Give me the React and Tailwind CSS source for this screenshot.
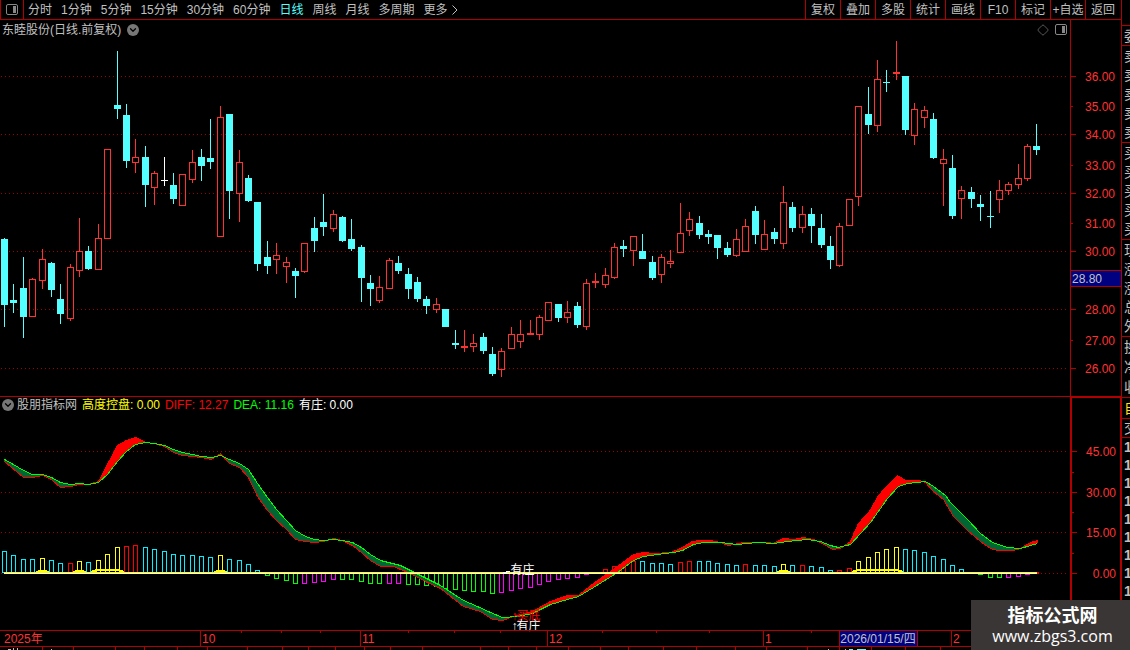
import React from 'react';
import { ChevronDown, Diamond } from 'lucide-react';

const RED = '#ff3232';
const CYAN = '#54ffff';

const periods = ['分时', '1分钟', '5分钟', '15分钟', '30分钟', '60分钟', '日线', '周线', '月线', '多周期'];
const tools = ['复权', '叠加', '多股', '统计', '画线', 'F10', '标记', '+自选', '返回'];

// [kind, high, low, body top, body bottom], r = up, c = down, w = flat
const candles = [
  ['c', 238, 327, 239, 305], ['c', 284, 313, 300, 303], ['c', 257, 338, 288, 317], ['r', 278, 317, 279, 317],
  ['r', 249, 289, 259, 281], ['c', 262, 297, 263, 290], ['c', 284, 324, 299, 314], ['r', 264, 321, 267, 319],
  ['r', 218, 277, 251, 271], ['c', 246, 270, 251, 269], ['r', 224, 270, 238, 270], ['r', 149, 239, 149, 239],
  ['c', 51, 119, 105, 109], ['c', 104, 168, 115, 161], ['r', 139, 173, 157, 163], ['c', 146, 207, 157, 185],
  ['r', 171, 205, 173, 188], ['w', 157, 186, 180, 181], ['c', 173, 204, 185, 199], ['r', 174, 206, 174, 206],
  ['r', 150, 183, 162, 180], ['c', 149, 181, 157, 166], ['c', 119, 169, 158, 162], ['r', 106, 237, 117, 237],
  ['c', 114, 219, 114, 191], ['r', 150, 222, 162, 194], ['c', 175, 202, 178, 201], ['c', 202, 271, 202, 264],
  ['c', 241, 274, 257, 266], ['r', 243, 274, 255, 260], ['r', 257, 283, 262, 267], ['c', 268, 298, 271, 276],
  ['r', 243, 273, 243, 272], ['c', 217, 252, 228, 241], ['c', 194, 236, 222, 227], ['r', 210, 232, 214, 229],
  ['c', 216, 242, 217, 241], ['c', 219, 251, 239, 249], ['c', 245, 302, 247, 278], ['c', 275, 306, 283, 289],
  ['r', 276, 303, 287, 301], ['r', 258, 289, 260, 289], ['c', 256, 274, 263, 271], ['c', 268, 299, 274, 289],
  ['c', 277, 302, 282, 299], ['c', 296, 314, 299, 306], ['r', 298, 313, 304, 310], ['c', 309, 327, 309, 327],
  ['c', 330, 349, 343, 345], ['r', 330, 352, 346, 348], ['r', 334, 352, 343, 347], ['c', 333, 354, 337, 351],
  ['c', 347, 376, 354, 374], ['r', 348, 377, 351, 370], ['r', 327, 349, 334, 349], ['r', 320, 348, 334, 342],
  ['r', 320, 335, 333, 335], ['r', 315, 340, 317, 335], ['r', 302, 321, 302, 321], ['c', 304, 322, 304, 318],
  ['r', 301, 323, 312, 318], ['c', 302, 328, 306, 325], ['r', 279, 330, 283, 327], ['r', 273, 288, 281, 283],
  ['r', 268, 288, 275, 285], ['r', 243, 279, 247, 278], ['c', 240, 257, 246, 249], ['r', 236, 266, 236, 251],
  ['c', 234, 259, 251, 259], ['c', 256, 280, 262, 278], ['r', 254, 283, 257, 275], ['r', 250, 268, 261, 264],
  ['r', 203, 253, 233, 253], ['r', 212, 236, 219, 231], ['c', 216, 239, 223, 235], ['c', 230, 244, 234, 237],
  ['c', 235, 259, 235, 248], ['c', 242, 257, 248, 255], ['r', 229, 257, 239, 256], ['r', 219, 252, 226, 252],
  ['c', 206, 244, 211, 235], ['r', 220, 250, 234, 250], ['c', 228, 244, 232, 239], ['r', 186, 249, 202, 244],
  ['c', 202, 232, 207, 228], ['r', 206, 233, 214, 228], ['c', 208, 243, 214, 226], ['c', 214, 248, 228, 245],
  ['c', 236, 269, 246, 260], ['r', 223, 267, 226, 266], ['r', 199, 226, 199, 226], ['r', 106, 206, 106, 197],
  ['c', 87, 134, 114, 125], ['r', 60, 132, 79, 126], ['c', 70, 92, 82, 83], ['r', 41, 80, 72, 74],
  ['c', 76, 135, 76, 130], ['r', 103, 145, 109, 136], ['r', 106, 128, 110, 118], ['c', 113, 159, 119, 158],
  ['r', 149, 206, 159, 164], ['c', 155, 219, 168, 216], ['r', 186, 219, 190, 199], ['c', 187, 208, 192, 199],
  ['c', 195, 221, 204, 207], ['c', 191, 228, 216, 217], ['r', 180, 213, 190, 200], ['r', 182, 195, 184, 191],
  ['r', 164, 189, 178, 185], ['r', 144, 181, 146, 179], ['c', 124, 155, 146, 150],
];

// histogram: colour letter + far end of each bar, 573 is the zero line
const bars = (
  'c551 c555 c559 c559 y558 c560 c563 r563 y561 c562 y560 y554 y547 r546 r545 c547 c549 c551 c554 c555 ' +
  'c555 c556 c557 y555 c559 c560 c564 c570 g576 g579 g581 g584 m584 m583 m582 m580 g580 g580 g582 g584 ' +
  'g584 m584 m584 g585 g585 g586 g587 g589 g590 g591 g592 g592 g594 m593 m591 m589 m588 m585 m582 m580 ' +
  'm579 m578 m575 - r569 r566 r563 r561 c561 c563 c563 c564 r562 r561 c561 c561 c563 c564 c565 r564 ' +
  'c565 c565 c566 y564 c565 r565 c566 c567 c570 r570 r568 y561 y557 y552 y549 y547 c549 c550 c552 c556 ' +
  'c559 c565 c569 - g575 g578 g578 m578 m577 m575 -'
).split(' ');
const barColors = { c: '#00f0ff', y: '#ffff00', r: '#ff0000', g: '#00ff00', m: '#ff00ff' };

const dea = [
  [4, 459], [13, 464], [23, 470], [32, 474], [42, 474], [51, 477], [60, 482], [70, 484], [79, 483], [88, 484],
  [98, 482], [107, 474], [117, 461], [126, 451], [135, 444], [145, 442], [154, 443], [164, 445], [173, 449],
  [182, 452], [192, 454], [201, 456], [211, 457], [220, 455], [229, 459], [239, 463], [248, 469], [257, 483],
  [267, 497], [276, 509], [286, 520], [295, 530], [305, 536], [314, 539], [323, 540], [333, 539], [342, 540],
  [352, 542], [361, 547], [370, 554], [380, 560], [400, 565], [420, 575], [440, 585], [463, 600], [477, 606],
  [490, 612], [502, 617], [517, 616], [532, 613], [550, 604], [567, 599], [578, 596], [593, 587], [617, 572],
  [633, 560], [643, 556], [657, 554], [673, 552], [682, 550], [693, 544], [703, 542], [720, 542], [737, 544],
  [757, 542], [773, 543], [787, 541], [807, 539], [820, 541], [830, 545], [838, 547], [850, 544], [860, 533],
  [870, 522], [887, 498], [898, 486], [907, 483], [925, 481], [933, 486], [945, 495], [950, 502], [967, 519],
  [980, 533], [992, 542], [1007, 547], [1020, 548], [1037, 543],
];
const diff = [
  [4, 461], [23, 477], [32, 477], [42, 475], [51, 479], [60, 487], [70, 486], [79, 484], [88, 484], [98, 481],
  [107, 464], [117, 445], [126, 440], [135, 437], [145, 442], [154, 443], [164, 446], [173, 452], [182, 455],
  [192, 456], [201, 457], [211, 459], [220, 453], [229, 463], [239, 467], [248, 477], [257, 496], [267, 510],
  [276, 520], [286, 529], [295, 539], [305, 541], [314, 542], [323, 541], [333, 538], [342, 540], [352, 545],
  [361, 552], [370, 560], [380, 566], [393, 566], [410, 573], [427, 582], [440, 588], [463, 606], [480, 611],
  [492, 619], [502, 620], [513, 616], [532, 611], [550, 601], [567, 595], [578, 595], [593, 583], [617, 566],
  [633, 554], [643, 552], [653, 553], [670, 552], [680, 548], [692, 541], [700, 540], [710, 540], [720, 542],
  [728, 545], [743, 542], [767, 542], [773, 543], [783, 538], [793, 539], [803, 537], [813, 539], [822, 543],
  [832, 549], [840, 548], [850, 541], [858, 523], [869, 511], [878, 495], [887, 485], [897, 475], [905, 480],
  [919, 480], [925, 482], [933, 491], [943, 499], [953, 516], [967, 530], [980, 541], [990, 548], [997, 550],
  [1013, 550], [1020, 548], [1030, 542], [1037, 540],
];

const priceTicks = [
  ['36.00', 76], ['35.00', 106], ['34.00', 134], ['33.00', 165], ['32.00', 193], ['31.00', 223],
  ['30.00', 251], ['28.00', 309], ['27.00', 340], ['26.00', 368],
];
const indicatorTicks = [['45.00', 451], ['30.00', 492], ['15.00', 532], ['0.00', 573]];

// month widths in chart units, minor ticks measured from the month start
const months = [
  { label: '2025年', width: 200, ticks: [] },
  { label: '10', width: 160, ticks: [40, 80, 120] },
  { label: '11', width: 187, ticks: [47, 94, 140] },
  { label: '12', width: 216, ticks: [54, 108, 162] },
  { label: '1', width: 188, ticks: [47] },
  { label: '2', width: 170, ticks: [] },
];
const axisWidth = months.reduce((sum, m) => sum + m.width, 0);

const quoteGroups = [
  { rows: ['委'], box: 'h-5' },
  { rows: ['卖', '卖', '卖', '卖', '卖'], box: 'h-[97px]' },
  { rows: ['买', '买', '买', '买', '买'], box: 'h-[97px]' },
  { rows: ['现', '涨', '涨', '总', '外'], box: 'h-[97px]' },
  { rows: ['换', '净', '收'], box: 'h-[61px]' },
  { rows: ['自'], box: 'h-[21px] text-yellow-300' },
  { rows: ['交'], box: 'h-[19px]' },
];

const barX = (i) => Math.round(4 + i * 9.386);

// y of a polyline at x
const valueAt = (points, x) => {
  const i = Math.max(1, points.findIndex((p) => p[0] >= x));
  const [x0, y0] = points[i - 1];
  const [x1, y1] = points[i];
  return Math.round(y0 + ((y1 - y0) * (x - x0)) / (x1 - x0));
};

const bandPath = (rising) => {
  let d = '';
  for (let x = 4; x <= 1037; x++) {
    const a = valueAt(diff, x);
    const b = valueAt(dea, x);
    if (rising ? a < b : a > b) d += `M${x} ${Math.min(a, b)}h1V${Math.max(a, b)}h-1z`;
  }
  return d;
};

const toPath = (points) => 'M' + points.map(([x, y]) => `${x + 0.5} ${y + 0.5}`).join('L');

const GridLines = ({ rows }) =>
  rows.map((y) => (
    <line key={y} x1="1" x2="1067" y1={y + 0.5} y2={y + 0.5} stroke="#a00000" strokeDasharray="1 3" />
  ));

const RoundToggle = ({ label }) => (
  <button aria-label={label} className="flex h-3 w-3 items-center justify-center rounded-full bg-[#777777] text-black">
    <ChevronDown className="h-2.5 w-2.5" strokeWidth={3} />
  </button>
);

const PanelIcon = () => (
  <svg viewBox="0 0 12 11" className="h-[11px] w-3">
    <rect x="0.5" y="0.5" width="11" height="10" rx="1.5" fill="none" stroke="#888888" />
    <rect x="7" y="2" width="3" height="7" fill="#888888" />
  </svg>
);

const Toolbar = () => (
  <nav className="flex h-5 items-stretch border-b border-[#b00000]">
    <button aria-label="侧栏" className="flex w-6 items-center justify-center border-x border-[#b00000]">
      <PanelIcon />
    </button>
    <div className="ml-1 flex items-center gap-[9px]">
      {periods.map((p) => (
        <button key={p} className={p === '日线' ? 'text-[#54ffff]' : ''}>
          {p}
        </button>
      ))}
      <button className="flex items-center gap-1">
        更多
        <svg viewBox="0 0 6 10" className="h-2.5 w-1.5">
          <path d="M0.5 0.5L5 5L0.5 9.5" fill="none" stroke="currentColor" />
        </svg>
      </button>
    </div>
    <div className="ml-auto flex pr-px">
      {tools.map((t) => (
        <button key={t} className="w-[35px] border-l border-[#b00000] whitespace-nowrap">
          {t}
        </button>
      ))}
    </div>
  </nav>
);

const CandleChart = () => (
  <svg
    viewBox="0 38 1070 358"
    preserveAspectRatio="none"
    className="block h-[358px] w-full"
    shapeRendering="crispEdges"
  >
    <GridLines rows={[76, 134, 193, 251, 309, 368]} />
    {candles.map(([kind, high, low, top, bottom], i) => {
      const x = barX(i);
      const color = kind === 'r' ? RED : kind === 'c' ? CYAN : '#ffffff';
      const hollow = kind === 'r' && bottom - top > 2;
      return (
        <g key={i} fill={color}>
          <rect x={x} y={high} width="1" height={top - high} />
          <rect x={x} y={bottom} width="1" height={low - bottom} />
          {hollow ? (
            <rect x={x - 2.5} y={top + 0.5} width="6" height={bottom - top - 1} fill="none" stroke={color} />
          ) : (
            <rect x={x - 3} y={top} width="7" height={bottom - top} />
          )}
        </g>
      );
    })}
  </svg>
);

const IndicatorChart = () => (
  <svg
    viewBox="0 414 1070 216"
    preserveAspectRatio="none"
    className="block h-[216px] w-full"
    shapeRendering="crispEdges"
  >
    <GridLines rows={[451, 492, 532, 573]} />
    {bars.map((bar, i) => {
      if (bar === '-') return null;
      const end = Number(bar.slice(1));
      const top = Math.min(end, 573);
      return (
        <rect
          key={i}
          x={barX(i) - 1.5}
          y={top + 0.5}
          width="4"
          height={Math.max(1, Math.abs(end - 573) - 1)}
          fill="none"
          stroke={barColors[bar[0]]}
        />
      );
    })}
    <path d={bandPath(true)} fill="#ff0000" />
    <path d={bandPath(false)} fill="#006633" />
    <path d={toPath(diff)} fill="none" stroke="#ff0000" />
    <path d={toPath(dea)} fill="none" stroke="#00ff00" />
    <rect x="4" y="572" width="1033" height="1" fill="#ffff00" />
    <rect x="4" y="573" width="1033" height="1" fill="#ffffff" />
    <rect x="1037" y="572" width="2" height="2" fill="#ff0000" />
    <path
      d="M36 572l4-1h5l4 1M73 572l4-1h5l4 1M91 572l6-2h21l6 2M214 572l4-1h5l4 1M777 572l4-1h5l4 1M852 572l6-2h39l6 2"
      fill="none"
      stroke="#ffff00"
      strokeWidth="2"
    />
    <path d="M503 572.5h3v-1h4" fill="none" stroke="#ffffff" />
  </svg>
);

// scale on the right of a chart, y in the same units as the chart
const Scale = ({ from, height, ticks, minor }) => (
  <svg width="48" height={height} viewBox={`0 ${from} 48 ${height}`} className="block">
    {ticks.map(([label, y]) => (
      <g key={label}>
        <text x="44" y={y + 5} textAnchor="end" fontSize="12" fill={RED}>
          {label}
        </text>
        {!minor.includes(y) && <rect x="0" y={y} width="5" height="1" fill="#b00000" />}
      </g>
    ))}
    {minor.map((y) => (
      <rect key={y} x="0" y={y} width="2" height="1" fill="#b00000" />
    ))}
  </svg>
);

const TimeAxis = () => (
  <div className="relative flex h-[17px] border-y border-[#b00000] text-[#ff3232]">
    {months.map((m, i) => (
      <div
        key={m.label}
        className={`relative flex items-center ${i ? 'border-l border-[#b00000] pl-px' : 'pl-1'}`}
        style={{ width: `${(m.width / axisWidth) * 100}%` }}
      >
        {m.label}
        {m.ticks.map((t) => (
          <i key={t} className="absolute top-0 h-0.5 w-px bg-[#b00000]" style={{ left: `${(t / m.width) * 100}%` }} />
        ))}
      </div>
    ))}
    {/* Crosshair date */}
    <div className="absolute top-0 left-[74.8%] flex h-full w-[79px] items-center justify-center border-x border-[#b00000] bg-[#000080] whitespace-nowrap text-[#c0c0c0]">
      2026/01/15/四
    </div>
  </div>
);

const bottomTicks = [
  42, 73, 115, 144, 177, 207, 247, 282, 308, 335, 364, 390, 422, 480, 508, 536, 568, 600, 628, 663, 696, 735, 766,
  807, 839, 871, 905, 940,
];

const QuoteStrip = () => (
  <aside className="w-[9px] shrink-0 overflow-hidden border-l border-[#b00000] pt-[25px] text-sm leading-none">
    {quoteGroups.map((g, i) => (
      <div key={i} className={`flex flex-col justify-around border-t border-[#b00000] pl-0.5 ${g.box}`}>
        {g.rows.map((r, j) => (
          <span key={j}>{r}</span>
        ))}
      </div>
    ))}
    <div className="border-t border-[#b00000] pl-0.5 font-bold leading-[18px]">
      {Array.from({ length: 9 }, (_, i) => (
        <div key={i}>1</div>
      ))}
    </div>
  </aside>
);

const App = () => {
  return (
    <div className="relative flex h-screen overflow-hidden bg-black font-['Liberation_Sans','Noto_Sans_CJK_SC',sans-serif] text-xs text-[#c0c0c0]">
      <main className="flex min-w-0 flex-1 flex-col">
        <Toolbar />

        {/* Price panel */}
        <section className="flex">
          <div className="min-w-0 flex-1">
            <header className="flex h-[18px] items-center gap-1.5 pt-px pr-[3px] pl-0.5">
              <h1>东睦股份(日线.前复权)</h1>
              <RoundToggle label="股票菜单" />
              <button aria-label="标记" className="ml-auto text-[#777777]">
                <Diamond className="h-3 w-3" strokeWidth={1.5} />
              </button>
              <button aria-label="面板">
                <PanelIcon />
              </button>
            </header>
            <CandleChart />
          </div>
          <div className="relative w-[51px] border-l border-[#b00000]">
            <Scale from={20} height={376} ticks={priceTicks} minor={[106, 165, 223, 340]} />
            <div className="absolute top-[250px] left-0 flex h-[17px] w-full items-center border-y border-[#b00000] bg-[#000080] pl-px">
              28.80
            </div>
          </div>
        </section>

        {/* Indicator panel */}
        <section className="flex">
          <div className="relative min-w-0 flex-1 border-t border-[#b00000]">
            <header className="flex h-[17px] items-center gap-[5px] pb-0.5 pl-0.5 whitespace-nowrap">
              <div className="flex items-center gap-[3px]">
                <RoundToggle label="指标菜单" />
                <span>股朋指标网</span>
              </div>
              <span className="text-[#ffff00]">高度控盘: 0.00</span>
              <span className="text-[#ff0000]">DIFF: 12.27</span>
              <span className="text-[#00ff00]">DEA: 11.16</span>
              <span className="text-white">有庄: 0.00</span>
            </header>
            <IndicatorChart />
            <span className="absolute bottom-[52px] left-[47.7%] leading-4 text-white">有庄</span>
            <span className="absolute bottom-1.5 left-[47.8%] flex leading-4 text-[#ff0000]">
              <i className="w-[5px] not-italic">↑</i>买底
            </span>
            <span className="absolute -bottom-1 left-[47.8%] flex leading-4 text-white">
              <i className="w-[5px] not-italic">↑</i>有庄
            </span>
          </div>
          <div className="w-[51px] border-t-2 border-r border-l-2 border-[#b00000]">
            <Scale from={398} height={232} ticks={indicatorTicks} minor={[472, 512, 553]} />
          </div>
        </section>

        <TimeAxis />
        <svg viewBox="0 647 1121 3" preserveAspectRatio="none" className="block h-[3px] w-full" shapeRendering="crispEdges">
          {bottomTicks.map((x) => (
            <rect key={x} x={x} y="647" width="1" height="3" fill="#b00000" />
          ))}
          <path d="M8 649h3v1h-3zM13 648h1v2h-1zM17 648h1v2h-1zM51 649h1v1h-1zM828 649h1v1h-1zM845 649h1v1h-1z" fill="#c0c0c0" />
          <path d="M849 649h4v1h-4zM857 649h9v1h-9z" fill={CYAN} />
        </svg>
      </main>

      <QuoteStrip />

      {/* Site badge */}
      <div className="absolute right-0 bottom-0 flex h-[50px] w-[159px] flex-col items-center justify-center bg-[#3b3636] pt-0.5 pl-1 text-white">
        <strong className="text-lg leading-5">指标公式网</strong>
        <a href="#" className="font-['Open_Sans',sans-serif] text-base leading-5">
          www.zbgs3.com
        </a>
      </div>
    </div>
  );
};

export default App;
